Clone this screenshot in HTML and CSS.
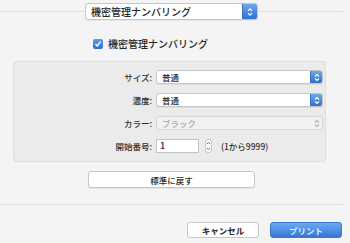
FILE: index.html
```html
<!DOCTYPE html>
<html lang="ja">
<head>
<meta charset="utf-8">
<link rel="stylesheet" href="styles.css">
</head>
<body>
<div class="sheet">
  <div class="top">
    <div class="line"></div>
    <div class="popup popup-main">
      <span class="popup-text">機密管理ナンバリング</span>
      <span class="popup-arrows"><svg width="6" height="10" viewBox="0 0 6 10"><path d="M1 3.8 L3 1.8 L5 3.8 M1 6.2 L3 8.2 L5 6.2" fill="none" stroke="#fff" stroke-width="1.2"/></svg></span>
    </div>
    <div class="line"></div>
  </div>

  <label class="check-row">
    <span class="check"><svg width="8" height="8" viewBox="0 0 8 8"><path d="M1.5 4.2 L3.2 6 L6.6 1.6" fill="none" stroke="#fff" stroke-width="1.4"/></svg></span>
    <span class="check-label">機密管理ナンバリング</span>
  </label>

  <div class="box">
    <div class="form">
      <div class="lbl">サイズ:</div>
      <div class="popup popup-row">
        <span class="popup-text">普通</span>
        <span class="popup-arrows"><svg width="6" height="9" viewBox="0 0 6 9"><path d="M1 3.5 L3 1.5 L5 3.5 M1 5.5 L3 7.5 L5 5.5" fill="none" stroke="#fff" stroke-width="1.1"/></svg></span>
      </div>

      <div class="lbl">濃度:</div>
      <div class="popup popup-row">
        <span class="popup-text">普通</span>
        <span class="popup-arrows"><svg width="6" height="9" viewBox="0 0 6 9"><path d="M1 3.5 L3 1.5 L5 3.5 M1 5.5 L3 7.5 L5 5.5" fill="none" stroke="#fff" stroke-width="1.1"/></svg></span>
      </div>

      <div class="lbl">カラー:</div>
      <div class="popup popup-row disabled">
        <span class="popup-text">ブラック</span>
        <span class="popup-arrows"><svg width="6" height="9" viewBox="0 0 6 9"><path d="M1 3.5 L3 1.5 L5 3.5 M1 5.5 L3 7.5 L5 5.5" fill="none" stroke="#b0b0b0" stroke-width="1.1"/></svg></span>
      </div>

      <div class="lbl">開始番号:</div>
      <div class="num-row">
        <div class="num-input">1</div>
        <div class="stepper"><svg width="7" height="14" viewBox="0 0 7 14"><path d="M2 5 L3.5 3.5 L5 5 M2 9 L3.5 10.5 L5 9" fill="none" stroke="#666" stroke-width="1"/></svg></div>
        <div class="range">(1から9999)</div>
      </div>
    </div>
  </div>

  <div class="reset-row">
    <button class="btn reset">標準に戻す</button>
  </div>

  <div class="sep"></div>

  <div class="actions">
    <button class="btn cancel">キャンセル</button>
    <button class="btn print">プリント</button>
  </div>
</div>
</body>
</html>
```

FILE: styles.css
```css
html, body {
  margin: 0;
  padding: 0;
  background: #f4f4f4;
}
body {
  font-family: "Noto Sans CJK JP", "Liberation Sans", sans-serif;
  font-weight: 500;
  color: #262626;
  width: 350px;
  height: 243px;
  overflow: hidden;
}
.sheet {
  width: 343px;
  display: flex;
  flex-direction: column;
}
.top {
  display: flex;
  align-items: center;
  height: 17px;
  margin-top: 3px;
}
.line {
  flex: 1;
  height: 1px;
  background: #dcdcdc;
}
.popup {
  display: flex;
  align-items: stretch;
  background: #fff;
  border: 1px solid #c6c6c6;
  border-radius: 3px;
  box-shadow: 0 1px 0 rgba(0,0,0,0.06);
  box-sizing: border-box;
  overflow: hidden;
}
.popup-main {
  width: 173px;
  height: 17px;
  margin: 0 1px;
}
.popup-text {
  flex: 1;
  font-size: 10px;
  line-height: 15px;
  padding-left: 5px;
  white-space: nowrap;
}
.popup-arrows {
  width: 14px;
  display: flex;
  align-items: center;
  justify-content: center;
  background: linear-gradient(#6fa9ec, #2f6fcf);
  border-left: 1px solid #3a74c8;
}
.check-row {
  display: flex;
  align-items: center;
  margin-top: 19px;
  margin-left: 93px;
  height: 10px;
}
.check {
  width: 10px;
  height: 10px;
  border-radius: 2px;
  background: linear-gradient(#5a9be6, #2e6fcf);
  display: flex;
  align-items: center;
  justify-content: center;
  box-sizing: border-box;
}
.check-label {
  font-size: 10px;
  margin-left: 5px;
  line-height: 10px;
}
.box {
  margin: 12px 0 0 13px;
  width: 313px;
  height: 101px;
  box-sizing: border-box;
  background: #ebebeb;
  border: 1px solid #dedede;
  border-radius: 3px;
  padding: 8px 2px 0 0;
}
.form {
  display: grid;
  grid-template-columns: 138px 1fr;
  column-gap: 4px;
  row-gap: 9px;
  align-items: center;
}
.lbl {
  text-align: right;
  font-size: 8.5px;
  line-height: 14px;
  color: #2e2e2e;
}
.popup-row {
  height: 14px;
}
.popup-row .popup-text {
  font-size: 8.5px;
  line-height: 12px;
}
.popup-row .popup-arrows {
  width: 11px;
}
.popup-row.disabled {
  background: #f1f1f1;
  border-color: #d6d6d6;
  box-shadow: none;
}
.popup-row.disabled .popup-text {
  color: #a8a8a8;
}
.popup-row.disabled .popup-arrows {
  background: none;
  border-left: none;
}
.num-row {
  display: flex;
  align-items: center;
  height: 14px;
}
.num-input {
  width: 43px;
  height: 14px;
  box-sizing: border-box;
  background: #fff;
  border: 1px solid #c4c4c4;
  font-size: 9px;
  line-height: 12px;
  padding-left: 3px;
}
.stepper {
  width: 7px;
  height: 14px;
  margin-left: 6px;
  box-sizing: border-box;
  border: 1px solid #c8c8c8;
  border-radius: 3px;
  background: #fafafa;
  display: flex;
  align-items: center;
  justify-content: center;
  overflow: hidden;
}
.stepper svg {
  flex: none;
}
.range {
  margin-left: 9px;
  font-size: 8.5px;
  color: #2e2e2e;
}
.btn {
  font-family: "Noto Sans CJK JP", "Liberation Sans", sans-serif;
  font-size: 8.5px;
  font-weight: 500;
  padding: 0;
  margin: 0;
  border-radius: 3px;
  box-sizing: border-box;
  cursor: default;
}
.reset-row {
  display: flex;
  justify-content: center;
  margin-top: 9px;
}
.reset {
  width: 167px;
  height: 17px;
  background: #fff;
  border: 1px solid #c6c6c6;
  color: #262626;
  box-shadow: 0 1px 0 rgba(0,0,0,0.06);
}
.sep {
  height: 1px;
  background: #dcdcdc;
  margin-top: 16px;
}
.actions {
  display: flex;
  justify-content: flex-end;
  gap: 11px;
  margin-top: 17px;
  padding-right: 1px;
}
.cancel {
  width: 72px;
  height: 16px;
  background: #fff;
  border: 1px solid #c6c6c6;
  color: #262626;
  font-weight: 700;
}
.print {
  width: 72px;
  height: 16px;
  background: linear-gradient(#6aaaf0, #3478d6);
  border: 1px solid #3c78cc;
  color: #dce9fb;
  font-weight: 700;
}
```
